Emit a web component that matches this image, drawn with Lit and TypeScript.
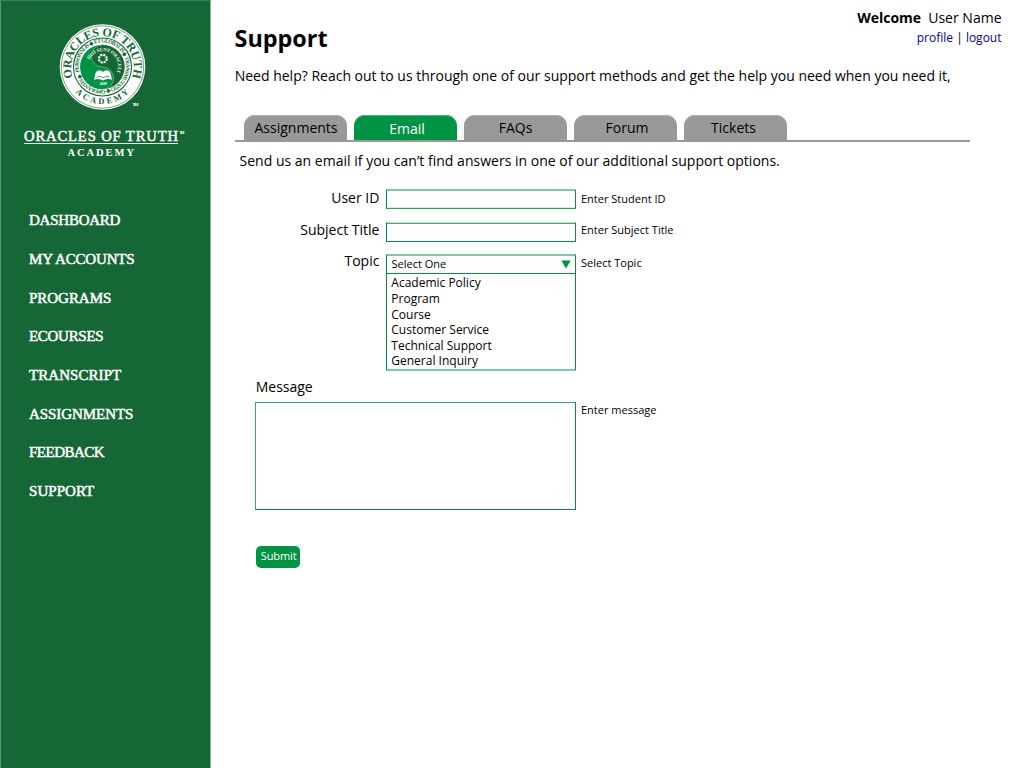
import { LitElement, html, css } from "lit";
import { customElement, property } from "lit/decorators.js";

interface MenuItem { label: string; tracking: number; }

const MENU: MenuItem[] = [
  { label: "DASHBOARD", tracking: -0.24 },
  { label: "MY ACCOUNTS", tracking: -0.17 },
  { label: "PROGRAMS", tracking: -0.03 },
  { label: "ECOURSES", tracking: -0.3 },
  { label: "TRANSCRIPT", tracking: 0.06 },
  { label: "ASSIGNMENTS", tracking: -0.06 },
  { label: "FEEDBACK", tracking: -0.5 },
  { label: "SUPPORT", tracking: 0.05 },
];
const TABS = ["Assignments", "Email", "FAQs", "Forum", "Tickets"];
const TOPICS = ["Academic Policy", "Program", "Course", "Customer Service", "Technical Support", "General Inquiry"];

@customElement("academy-logo")
class AcademyLogo extends LitElement {
  static styles = css`
    :host { display: block; }
    svg { display: block; }
    text { font-family: "Liberation Serif", serif; font-weight: 700; }
    .wordmark { font-weight: 400; stroke: #fff; stroke-width: 0.45px; }
  `;
  render() {
    return html`<svg width="209" height="166" viewBox="1 0 209 166">
      <defs>
        <path id="nameArc" d="M72.900 77.500 A31.300 31.300 0 1 1 132.100 77.500" />
        <path id="academyArc" d="M75.400 92.200 A37 37 0 0 0 129.600 92.200" />
        <path id="ringArc" d="M79.200 71.800 A23.800 23.800 0 1 1 79.300 72.200" />
        <path id="mottoArc" d="M89.500 59.500 A15 15 0 1 1 116.500 73" />
      </defs>
      <circle cx="102.5" cy="67" r="42.8" fill="#fff" />
      <circle cx="102.5" cy="67" r="41.2" fill="none" stroke="#166736" stroke-width=".6" />
      <circle cx="102.5" cy="67" r="29" fill="none" stroke="#166736" stroke-width="1.100" />
      <circle cx="102.5" cy="67" r="22.200" fill="#166736" />
      <path d="M102.500 44.800 A22.200 22.200 0 0 0 102.500 89.200 A11.100 11.100 0 0 0 102.500 67 A11.100 11.100 0 0 1 102.500 44.800" fill="#009344" />
      <path d="M102.500 44.800 A11.100 11.100 0 0 0 102.500 67 A11.100 11.100 0 0 1 102.500 89.200" fill="none" stroke="#8fcfa6" stroke-width=".6" />
      <g fill="#166736">
        <text font-size="12" textLength="119"><textPath href="#nameArc">ORACLES OF TRUTH</textPath></text>
        <text font-size="8.500" textLength="60"><textPath href="#academyArc">ACADEMY</textPath></text>
        <text font-size="5.500" textLength="147"><textPath href="#ringArc">PERSONALIS ◆ ET GLOBALIS ◆ TRANSMUTATIO ◆ OPERANTIS ◆</textPath></text>
      </g>
      <g fill="#fff">
        <text font-size="4.800" textLength="46"><textPath href="#mottoArc">HOS SUNT ORACULI</textPath></text>
        <circle cx="102.800" cy="58.700" r="3.900" fill="none" stroke="#fff" stroke-width="2.200" stroke-dasharray="2.100 .963" />
        <path d="M95.500 73 Q96.500 70.500 99.500 70.300 Q102 70.500 103 72 Q104 70.500 106.500 70.300 Q109.500 70.500 110.500 73 L112 79.800 Q107 77.800 103 80.500 Q99 77.800 94 79.800Z" />
        <path d="M96.500 77 Q100.500 75.300 103 77.800 Q105.500 75.300 109.500 77" fill="none" stroke="#166736" stroke-width=".7" />
        <text x="99.500" y="84.800" font-size="4" textLength="7.500">2009</text>
        <text x="132.500" y="105.500" font-size="5" textLength="6">TM</text>
        <text class="wordmark" x="24" y="140.500" font-size="14.600" textLength="154">ORACLES OF TRUTH</text>
        <text x="179.500" y="134" font-size="4.500" textLength="5">TM</text>
        <rect x="24" y="143" width="154" height="1" fill="#dce9e0" />
        <text x="67.500" y="156.300" font-size="10.500" textLength="66.500">ACADEMY</text>
      </g>
    </svg>`;
  }
}

@customElement("side-bar")
class SideBar extends LitElement {
  static styles = css`
    :host { display: block; box-sizing: border-box; width: 211px; flex: none; background: #166736; border-left: 1px solid #5c9573; border-right: 1px solid #8ab39b; border-top: 1px solid #3d7f57; }
    academy-logo { margin-top: -1px; }
    .menu { display: flex; flex-direction: column; padding: 44.2px 0 0 28px; }
    .menu a { height: 38.7px; line-height: 20px; font-family: "Liberation Serif", serif; font-size: 15px; color: #fff; -webkit-text-stroke: 0.5px #fff; white-space: nowrap; }
  `;
  render() {
    return html`<academy-logo></academy-logo>
      <nav class="menu">${MENU.map(m => html`<a style="letter-spacing:${m.tracking}px">${m.label}</a>`)}</nav>`;
  }
}

@customElement("tab-strip")
class TabStrip extends LitElement {
  @property() active = "";
  static styles = css`
    :host { display: flex; gap: 7px; padding-left: 9px; width: 726px; border-bottom: 2px solid #999; }
    .tab { box-sizing: border-box; width: 103px; height: 25px; padding-top: 3px; border-radius: 11px 11px 0 0; background: #999; box-shadow: inset 0 1px 0 #b0b0b0; text-align: center; }
    .assignments { padding-left: 1px; }
    .active { background: #009344; color: #fff; padding: 4px 0 0 3px; box-shadow: inset 0 1px 0 #4db37c; }
    .forum { padding-left: 3px; }
    .tickets { padding-right: 4px; }
  `;
  render() {
    return html`${TABS.map(t => html`<div class="tab ${t.toLowerCase()} ${t === this.active ? "active" : ""}">${t}</div>`)}`;
  }
}

@customElement("app-root")
class AppRoot extends LitElement {
  static styles = css`
    :host { display: flex; width: 1024px; height: 768px; background: #fff; color: #000; font: 14px/20px "Open Sans", sans-serif; overflow: hidden; }
    .main { flex: 1; padding-left: 24px; }
    .header { display: flex; justify-content: space-between; height: 66px; }
    h1 { margin: 0 0 0 -0.5px; padding-top: 21px; font-size: 23.4px; line-height: 34px; }
    .user { padding: 8px 22.5px 0 0; text-align: right; }
    .user b { margin-right: 3.5px; }
    .links { font-size: 12px; line-height: 19px; }
    .links a { color: #00009c; }
    .intro { margin: 0 0 29px -0.3px; white-space: nowrap; }
    .lead { margin: 9px 0 17px; padding-left: 4.5px; letter-spacing: 0.012px; }
    .form { display: grid; grid-template-columns: 145px 190px 1fr; grid-template-rows: 32px 31px 126px; column-gap: 6px; align-items: start; }
    .label { text-align: right; padding-right: 0.6px; }
    .hint { font-size: 11px; margin-left: -1px; }
    .hint.id-hint { margin-top: 1px; }
    .hint.topic-hint { margin-top: 2px; }
    .field { box-sizing: border-box; height: 20px; border: 1px solid #009344; }
    .id { margin-top: 1px; border-top: 2px solid #80c9a1; border-bottom-color: #26a25f; box-shadow: inset 0 -1px 0 #d9efe2; }
    .subject { margin-top: 2px; border-top-color: #bfe4d0; box-shadow: inset 0 1px 0 #40ae73; }
    .select { box-sizing: border-box; height: 117px; margin-top: 3px; border: 1px solid #009344; border-top: 2px solid #80c9a1; border-bottom: 2px solid #80c9a1; }
    .chosen { display: flex; align-items: center; justify-content: space-between; height: 17px; padding: 0 4.5px 0 4.5px; border-bottom: 1px solid #009344; font-size: 11px; line-height: 15px; }
    .chosen span { margin-top: -2px; }
    .options { padding: 1.4px 4.3px 0; font-size: 12px; line-height: 15.6px; }
    .message { display: grid; grid-template-columns: 321px 1fr; column-gap: 5px; padding-left: 20px; align-items: start; }
    .message .label { grid-column: 1 / 3; text-align: left; padding-left: 0.7px; }
    .area { box-sizing: border-box; height: 108px; margin-top: 5px; border: 1px solid #009344; border-left-color: #33a969; border-top-color: #33a969; }
    .message .hint { margin: 3px 0 0; }
    .submit { box-sizing: border-box; width: 44.500px; height: 22px; margin: 35.6px 0 0 20.700px; padding-left: 1.500px; border-radius: 5px; background: #009344; color: #fff; font-size: 11px; line-height: 20px; text-align: center; letter-spacing: -0.08px; }
  `;
  render() {
    return html`<side-bar></side-bar>
      <main class="main">
        <header class="header">
          <h1>Support</h1>
          <div class="user">
            <div><b>Welcome</b> User Name</div>
            <div class="links"><a>profile</a> | <a>logout</a></div>
          </div>
        </header>
        <p class="intro">Need help? Reach out to us through one of our support methods and get the help you need when you need it,</p>
        <tab-strip active="Email"></tab-strip>
        <p class="lead">Send us an email if you can’t find answers in one of our additional support options.</p>
        <section class="form">
          <div class="label">User ID</div><div class="field id"></div><div class="hint id-hint">Enter Student ID</div>
          <div class="label">Subject Title</div><div class="field subject"></div><div class="hint">Enter Subject Title</div>
          <div class="label">Topic</div>
          <div class="select">
            <div class="chosen"><span>Select One</span>
              <svg width="10" height="9" viewBox="0 0 10 9"><path d="M0.300 0.500H9.700L5 8.500Z" fill="#009344" /></svg>
            </div>
            <div class="options">${TOPICS.map(t => html`<div>${t}</div>`)}</div>
          </div>
          <div class="hint topic-hint">Select Topic</div>
        </section>
        <section class="message">
          <div class="label">Message</div>
          <div class="area"></div>
          <div class="hint">Enter message</div>
        </section>
        <div class="submit">Submit</div>
      </main>`;
  }
}
